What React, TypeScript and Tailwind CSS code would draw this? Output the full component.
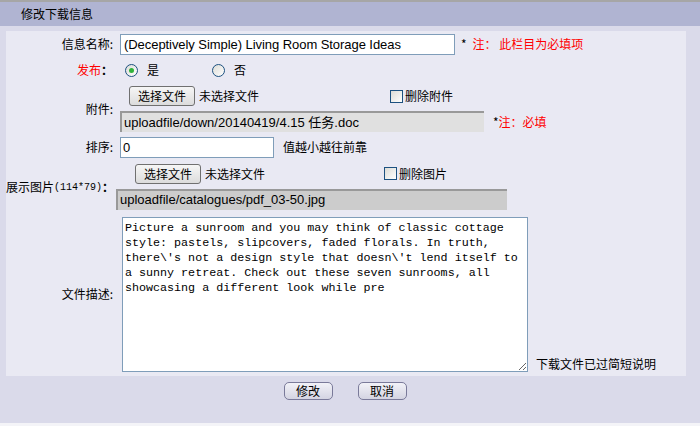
const cn = '"Noto Sans CJK SC", "Liberation Sans", sans-serif';

const FakeFile = ({ className }: { className?: string }) => (
    <div className={`flex items-center ${className || ''}`}>
        <span className="flex h-[20px] w-[66px] items-center justify-center rounded-[3px] border border-[#707070] bg-gradient-to-b from-[#f6f6f6] to-[#dcdcdc] text-[12px] text-black">
            选择文件
        </span>
        <span className="ml-[4px] text-[12px] text-black">未选择文件</span>
    </div>
);

const Check = ({ label, className }: { label: string; className?: string }) => (
    <div className={`flex items-center ${className || ''}`}>
        <span className="h-[13px] w-[13px] border border-[#1c5180] bg-gradient-to-br from-[#dcdcd6] to-white" />
        <span className="ml-[2px] text-[12px] text-black">{label}</span>
    </div>
);

const Radio = ({ checked, label }: { checked?: boolean; label: string }) => (
    <div className="flex items-center">
        <span className="flex h-[13px] w-[13px] items-center justify-center rounded-full border border-[#1c5180] bg-gradient-to-br from-[#dcdcd6] to-white">
            {checked && <span className="h-[5px] w-[5px] rounded-full bg-[#2fb33a]" />}
        </span>
        <span className="ml-[9px] text-[12px] text-black">{label}</span>
    </div>
);

const Label = ({ children, className }: { children: React.ReactNode; className?: string }) => (
    <div className={`w-[107px] shrink-0 text-right text-[12px] text-black ${className || ''}`}>{children}</div>
);

export default function App() {
    return (
        <div className="h-[426px] w-[700px] bg-[#f4f4f8]" style={{ fontFamily: cn }}>
            <div className="h-[2px] bg-[#a6a6a6]" />
            <div className="flex h-[24px] items-center bg-[#b0b4d2] pl-[21px] text-[12px] text-black">
                修改下载信息
            </div>
            <div className="flex h-[397px] flex-col bg-[#dadaea] px-[6px] pt-[5px]">
                <div className="flex w-[680px] flex-col bg-[#e9e9f3]">
                    {/* 信息名称 */}
                    <div className="flex h-[26px] items-center">
                        <Label>信息名称:</Label>
                        <input
                            readOnly
                            value="(Deceptively Simple) Living Room Storage Ideas"
                            className="ml-[7px] h-[21px] w-[335px] border border-[#7f9db9] bg-white px-[3px] text-[13px] tracking-[-0.06px] text-black outline-none"
                            style={{ fontFamily: '"Liberation Sans", sans-serif' }}
                        />
                        <span className="ml-[6px] text-[12px] text-black">*</span>
                        <span className="ml-[6px] text-[12px] text-[#ff0000]">注： 此栏目为必填项</span>
                    </div>
                    {/* 发布 */}
                    <div className="flex h-[26px] items-center">
                        <Label>
                            <span className="text-[#ff0000]">发布</span>
                            <span className="font-bold">：</span>
                        </Label>
                        <div className="ml-[12px] flex w-[87px]">
                            <Radio checked label="是" />
                        </div>
                        <Radio label="否" />
                    </div>
                    {/* 附件 */}
                    <div className="flex h-[51px] items-center">
                        <Label>附件:</Label>
                        <div className="ml-[7px] flex flex-col">
                            <div className="flex h-[22px] items-center">
                                <FakeFile className="ml-[9px] w-[261px]" />
                                <Check label="删除附件" />
                            </div>
                            <div className="mt-[4px] flex h-[21px] items-center">
                                <div
                                    className="flex h-[21px] w-[364px] items-center border-l-2 border-t-2 border-[#999999] bg-[#e0e0e0] pl-[2px] text-[13px] text-black"
                                    style={{ fontFamily: '"Liberation Sans", "Noto Sans CJK SC", sans-serif' }}
                                >
                                    uploadfile/down/20140419/4.15 任务.doc
                                </div>
                                <span className="ml-[9px] text-[12px] text-black">*</span>
                                <span className="text-[12px] text-[#ff0000]">注：必填</span>
                            </div>
                        </div>
                    </div>
                    {/* 排序 */}
                    <div className="flex h-[26px] items-center">
                        <Label>排序:</Label>
                        <input
                            readOnly
                            value="0"
                            className="ml-[7px] h-[21px] w-[154px] border border-[#7f9db9] bg-white px-[2px] text-[13px] text-black outline-none"
                            style={{ fontFamily: '"Liberation Sans", sans-serif' }}
                        />
                        <span className="ml-[9px] text-[12px] text-black">值越小越往前靠</span>
                    </div>
                    {/* 展示图片 */}
                    <div className="flex h-[52px] items-center">
                        <div className="flex w-[104px] shrink-0 items-center whitespace-nowrap pt-[2px] text-[12px] text-black">
                            展示图片
                            <span className="text-[10px]" style={{ fontFamily: '"Liberation Mono", monospace' }}>
                                (114*79)
                            </span>
                            <span className="font-bold">：</span>
                        </div>
                        <div className="ml-[6px] flex flex-col">
                            <div className="flex h-[22px] items-center">
                                <FakeFile className="ml-[19px] w-[249px]" />
                                <Check label="删除图片" />
                            </div>
                            <div
                                className="mt-[4px] flex h-[21px] w-[391px] items-center border-l-2 border-t-2 border-[#999999] bg-[#cccccc] pl-[2px] text-[13px] text-black"
                                style={{ fontFamily: '"Liberation Sans", sans-serif' }}
                            >
                                uploadfile/catalogues/pdf_03-50.jpg
                            </div>
                        </div>
                    </div>
                    {/* 文件描述 */}
                    <div className="flex h-[164px] items-center">
                        <Label>文件描述:</Label>
                        <textarea
                            readOnly
                            defaultValue="Picture a sunroom and you may think of classic cottage style: pastels, slipcovers, faded florals. In truth, there\'s not a design style that doesn\'t lend itself to a sunny retreat. Check out these seven sunrooms, all showcasing a different look while pre"
                            className="ml-[9px] h-[155px] w-[406px] resize border border-[#7f9db9] bg-white px-[2px] py-[3px] text-[11.7px] leading-[15px] text-black outline-none"
                            style={{ fontFamily: '"Liberation Mono", monospace' }}
                        />
                        <span className="ml-[8px] self-end pb-[3px] text-[12px] text-black">下载文件已过简短说明</span>
                    </div>
                </div>
                <div className="mt-[6px] flex justify-center gap-[25px] pr-[10px]">
                    <button className="flex h-[18px] w-[49px] items-center justify-center rounded-[5px] border border-[#7a7a9a] bg-gradient-to-b from-[#f2f2f8] to-[#d4d4e2] text-[12px] text-black">
                        修改
                    </button>
                    <button className="flex h-[18px] w-[49px] items-center justify-center rounded-[5px] border border-[#7a7a9a] bg-gradient-to-b from-[#f2f2f8] to-[#d4d4e2] text-[12px] text-black">
                        取消
                    </button>
                </div>
            </div>
        </div>
    );
}
